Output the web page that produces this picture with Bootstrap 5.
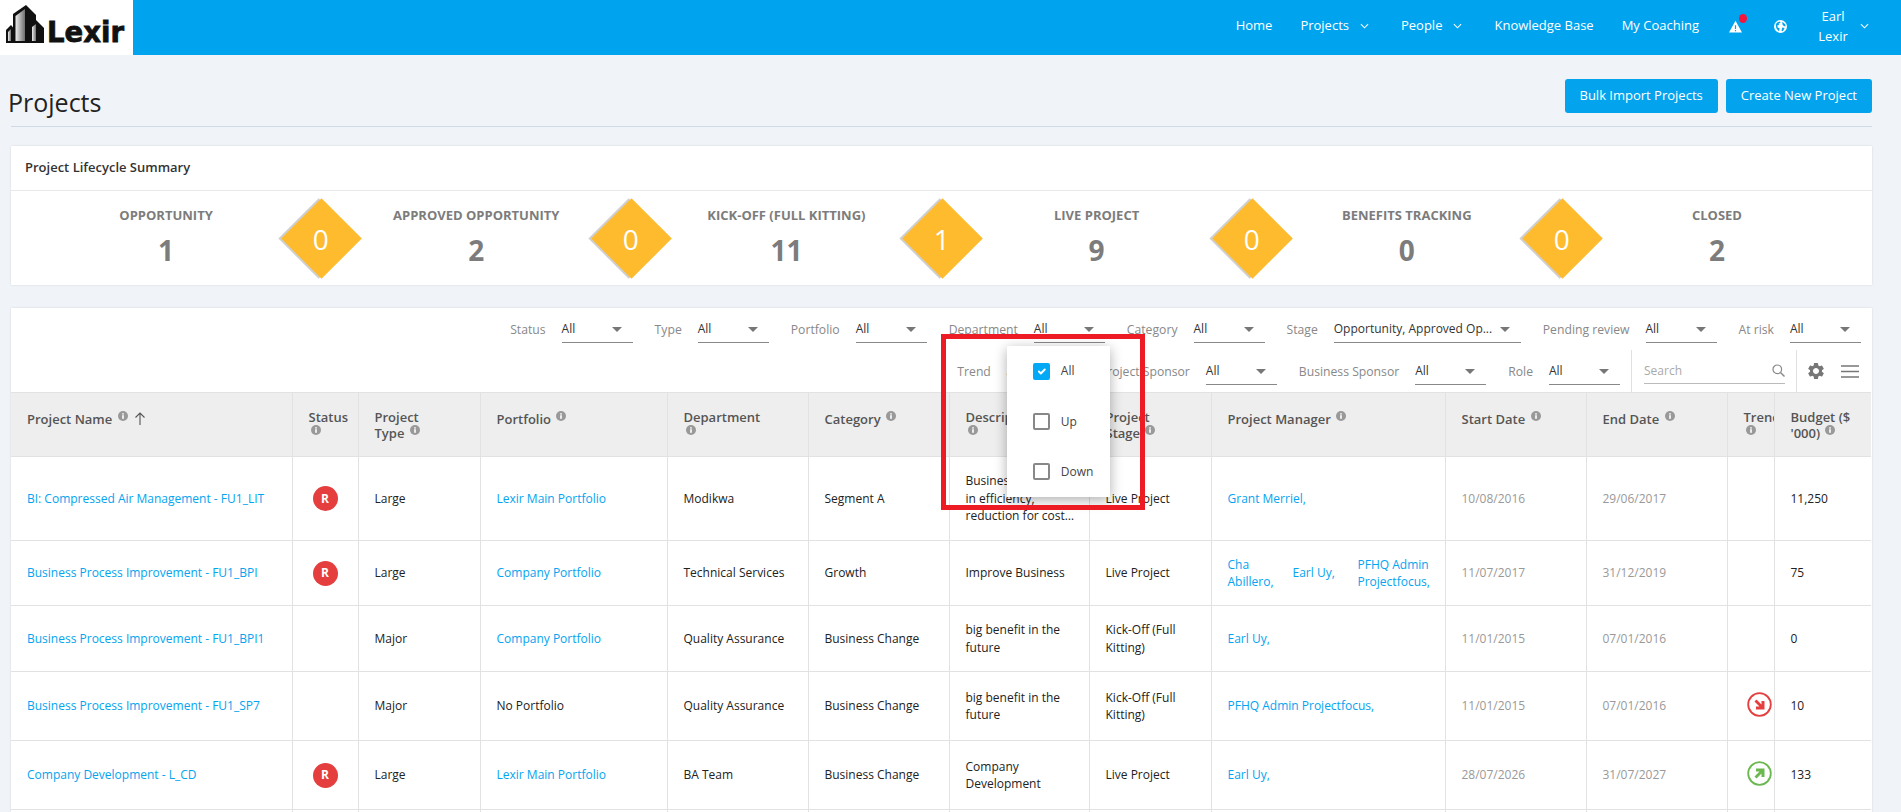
<!DOCTYPE html>
<html lang="en">
<head>
    <meta charset="UTF-8">
    <meta name="viewport" content="width=device-width, initial-scale=1.0">
    <title>Projects</title>
    <link href="https://cdn.jsdelivr.net/npm/bootstrap@5.3.0/dist/css/bootstrap.min.css" rel="stylesheet">
    <style>
        html, body { height: 100%; overflow: hidden; }
        body {
            background: #f0f4f8;
            font-family: "Open Sans", "Liberation Sans", sans-serif;
            font-size: 12px;
            color: #222;
        }
        a { text-decoration: none; color: #03a4f0; }

        .top-bar { height: 55px; background: #00a3ee; padding: 0; align-items: stretch; flex-wrap: nowrap; }
        .logo-box { width: 133px; background: #fff; display: block; }
        .top-links { height: 55px; align-items: center; flex-direction: row; padding-bottom: 3px; }
        .top-links .nav-link { color: #fff; font-size: 13px; font-weight: 500; padding: 0 14px; white-space: nowrap; display: flex; align-items: center; }
        .nav-chev { margin-left: 11px; margin-right: 4px; }
        .icon-link-box { position: relative; width: 45px; justify-content: center; padding: 0 !important; }
        .alert-dot { position: absolute; width: 8px; height: 9px; background: #f4143c; border-radius: 50%; left: 26px; top: -6px; }
        .user-name { width: 44px; text-align: center; line-height: 20px; }
        .user-link { padding: 0 32px 0 8px !important; }
        .user-link svg { margin-left: 5px; }

        .page-wrap { padding: 0 29px 0 11px; }
        .title-row { padding: 24px 0 7px; border-bottom: 1px solid #cfdae6; }
        .page-title { font-size: 25px; font-weight: 400; margin: 6px 0 0 -3px; color: #222; line-height: 34px; }
        .btn-lexir { background: #03a3ee; color: #fff; font-size: 13px; font-weight: 500; border: 0; border-radius: 3px; height: 34px; padding: 0 15px; }
        .btn-lexir:hover { background: #0392d6; color: #fff; }

        .panel-box { background: #fff; border: 0; border-radius: 0; box-shadow: 0 0 2px rgba(0,0,0,.12); }
        .summary-box { margin-top: 19px; height: 139px; }
        .summary-head { height: 45px; padding: 0 14px; font-size: 13px; font-weight: 600; color: #333; border-bottom: 1px solid #e8e8e8; display: flex; align-items: center; }
        .stage-col { flex: 1 1 0; position: relative; text-align: center; padding-top: 15px; height: 94px; }
        .stage-label { font-size: 13px; font-weight: 700; color: #7c7c7c; line-height: 18px; }
        .stage-num { font-size: 28px; font-weight: 700; color: #7c7c7c; line-height: 38px; margin-top: 7px; }
        .diamond-mark {
            position: absolute; right: -29px; top: 19px; width: 57px; height: 57px;
            background: #ffbb2e; transform: rotate(45deg); box-shadow: -2px 2px 0 #cfcfcf; z-index: 2;
            display: flex; align-items: center; justify-content: center;
        }
        .diamond-mark span { transform: rotate(-45deg); color: #fff; font-size: 28px; line-height: 1; }

        .list-box { margin-top: 23px; position: relative; }
        .filter-row { height: 42px; padding-right: 11px; justify-content: flex-end; }
        .filter-item { display: flex; align-items: flex-start; margin-left: 22px; padding-top: 9px; height: 42px; }
        .filter-label { color: #888; font-size: 12.2px; line-height: 26px; margin-right: 16px; white-space: nowrap; }
        .filter-pick { position: relative; width: 71px; height: 26px; border-bottom: 1px solid #888; color: #333; line-height: 24px; font-size: 12px; white-space: nowrap; }
        .filter-pick::after { content: ""; position: absolute; right: 11px; top: 10px; border: 5px solid transparent; border-top: 5px solid #777; border-bottom: 0; }
        .filter-pick.stage-pick { width: 187px; }
        .search-box { position: relative; width: 141px; height: 26px; border-bottom: 1px solid #bbb; color: #aaa; line-height: 26px; font-size: 12px; margin: 8px 11px 0 12px; }
        .search-box svg { position: absolute; right: 0; top: 6px; }
        .tool-zone { border-left: 1px solid #e0e0e0; height: 42px; margin-left: 11px; }
        .tool-icons { width: 76px; height: 42px; border-left: 1px solid #e0e0e0; padding-left: 9px; margin-right: -11px; display: flex; align-items: center; gap: 15px; }

        .trend-menu {
            display: block; position: absolute; left: 0; top: -13px; width: 103px; min-width: 0; height: 151px; padding: 0; border: 0; border-radius: 0;
            background: #fff; box-shadow: 0 3px 12px rgba(0,0,0,.32); z-index: 5; color: #444; font-size: 12px;
        }
        .trend-option { height: 50.4px; display: flex; align-items: center; padding-left: 26px; gap: 11px; margin: 0; }
        .trend-option .form-check-input { width: 17px; height: 17px; margin: 0; border: 2px solid #888; border-radius: 2px; flex: none; }
        .trend-option .form-check-input:checked { background-color: #03a9f4; border-color: #03a9f4; }
        .red-frame { position: absolute; left: 930px; top: 26px; width: 204px; height: 176px; border: 5px solid #ed1c24; z-index: 6; pointer-events: none; }

        .project-table { table-layout: fixed; width: 1860px; margin: 0; border-collapse: collapse; font-size: 12px; }
        .project-table th, .project-table td { border: 1px solid #e2e2e2; padding: 0 10px 0 16px; vertical-align: middle; overflow: hidden; }
        .project-table tr > :first-child { border-left: 0; }
        .project-table tr > :last-child { border-right: 0; }
        .project-table th { background: #eee; height: 64px; font-size: 13px; font-weight: 600; color: #555; line-height: 16px; }
        .project-table th.head-single { padding-bottom: 11px; }
        .project-table td { color: #222; line-height: 17.5px; }
        .project-table td.date-cell { color: #999; }
        .project-table td.trend-cell { text-align: right; padding: 0 2px 4px 0; }
        .project-table td.status-cell { text-align: center; padding: 0; }
        .project-table tbody tr:nth-child(1) td { height: 84px; }
        .project-table tbody tr:nth-child(2) td { height: 65px; }
        .project-table tbody tr:nth-child(3) td { height: 66px; }
        .project-table tbody tr:nth-child(4) td { height: 69px; }
        .project-table tbody tr:nth-child(5) td { height: 69px; }
        .project-table tbody tr:nth-child(6) td { height: 60px; }
        .cw-name { width: 281px; } .cw-status { width: 66px; } .cw-type { width: 122px; } .cw-port { width: 187px; }
        .cw-dept { width: 141px; } .cw-cat { width: 141px; } .cw-desc { width: 140px; } .cw-stage { width: 122px; }
        .cw-mgr { width: 234px; } .cw-date { width: 141px; } .cw-trend { width: 47px; } .cw-budget { width: 97px; }
        .info-mark { width: 10px; height: 10px; vertical-align: 3px; margin-left: 2px; }
        .sort-mark { width: 12px; height: 13px; vertical-align: -1px; margin-left: 6px; }
        .risk-badge { width: 25px; height: 25px; background: #e53e3e; color: #fff; font-weight: 700; font-size: 12px; border-radius: 50%; display: inline-flex; align-items: center; justify-content: center; }
        .clamp-three { display: -webkit-box; -webkit-line-clamp: 3; -webkit-box-orient: vertical; overflow: hidden; }
        .mgr-grid { display: grid; grid-template-columns: 65px 65px 1fr; align-items: center; }
    </style>
</head>
<body>
    <svg width="0" height="0" class="position-absolute">
        <defs>
            <symbol id="ic-info" viewBox="0 0 10 10">
                <circle cx="5" cy="5" r="5" fill="#999"/>
                <rect x="4.2" y="4.2" width="1.6" height="3.6" fill="#fff"/>
                <rect x="4.2" y="2.2" width="1.6" height="1.4" fill="#fff"/>
            </symbol>
            <symbol id="ic-chev" viewBox="0 0 10 6">
                <path d="M1 1l4 4 4-4" fill="none" stroke="#fff" stroke-width="1.2"/>
            </symbol>
            <linearGradient id="towerShade" x1="0" y1="0" x2="1" y2="0">
                <stop offset="0" stop-color="#efefef"/>
                <stop offset="1" stop-color="#6f6f6f"/>
            </linearGradient>
        </defs>
    </svg>

    <nav class="navbar top-bar">
        <a class="logo-box" href="#">
            <svg width="133" height="55" viewBox="0 0 133 55">
                <path d="M13 14 L26 5 L36 15 L36 43 L13 43 Z" fill="#111"/>
                <path d="M15.500 16 L25 9 L25 41 L15.500 41 Z" fill="url(#towerShade)"/>
                <path d="M6 43 L6 30 L11 25 L15 30 L15 43 Z" fill="#111"/>
                <path d="M8 32 L11 29 L11 41 L8 41 Z" fill="url(#towerShade)"/>
                <path d="M30 43 L30 24 L36 20 L44 28 L44 43 Z" fill="#111"/>
                <path d="M32 27 L36 24 L36 41 L32 41 Z" fill="url(#towerShade)"/>
                <text x="47" y="42" font-family="DejaVu Sans" font-weight="700" font-size="29" textLength="77" lengthAdjust="spacingAndGlyphs" stroke="#111" stroke-width=".8" fill="#111">Lexir</text>
            </svg>
        </a>
        <ul class="nav top-links ms-auto">
            <li class="nav-item"><a class="nav-link" href="#">Home</a></li>
            <li class="nav-item"><a class="nav-link" href="#">Projects<svg class="nav-chev" width="9" height="6"><use href="#ic-chev"/></svg></a></li>
            <li class="nav-item"><a class="nav-link" href="#">People<svg class="nav-chev" width="9" height="6"><use href="#ic-chev"/></svg></a></li>
            <li class="nav-item"><a class="nav-link" href="#">Knowledge Base</a></li>
            <li class="nav-item"><a class="nav-link" href="#">My Coaching</a></li>
            <li class="nav-item">
                <a class="nav-link icon-link-box" href="#">
                    <svg width="13" height="13" viewBox="0 0 15 15"><path fill="#fff" fill-rule="evenodd" d="M7.500 1 L15 14.500 L0 14.500 Z M6.800 6 L8.200 6 L8.200 10.500 L6.800 10.500 Z M6.800 11.500 L8.200 11.500 L8.200 13 L6.800 13 Z"/></svg>
                    <span class="alert-dot" aria-hidden="true"></span>
                </a>
            </li>
            <li class="nav-item">
                <a class="nav-link icon-link-box" href="#">
                    <svg width="13" height="13" viewBox="0 0 14 14"><circle cx="7" cy="7" r="7" fill="#fff"/><path fill="#00a3ee" d="M2 4.500 C3 2.500 5 1.500 6.500 1.500 L7 3 L5 4 L5.500 5.500 L3.500 6 L4 8 L6 9 L5.500 12 C3.500 11 1.500 8 2 4.500 Z M9 2 L12 4.500 L12.500 7 L10.500 6.500 L9 4.500 Z M9 8 L11.500 8.500 L9.500 12 L8 11.500 Z"/></svg>
                </a>
            </li>
            <li class="nav-item">
                <a class="nav-link user-link" href="#"><span class="user-name">Earl<br>Lexir</span><svg width="9" height="6"><use href="#ic-chev"/></svg></a>
            </li>
        </ul>
    </nav>

    <main class="page-wrap">
        <div class="title-row d-flex justify-content-between align-items-start">
            <h1 class="page-title">Projects</h1>
            <div class="d-flex gap-2">
                <button class="btn btn-lexir" type="button">Bulk Import Projects</button>
                <button class="btn btn-lexir" type="button">Create New Project</button>
            </div>
        </div>

        <section class="panel-box summary-box">
            <div class="summary-head">Project Lifecycle Summary</div>
            <div class="d-flex">
                <div class="stage-col"><div class="stage-label">OPPORTUNITY</div><div class="stage-num">1</div><div class="diamond-mark"><span>0</span></div></div>
                <div class="stage-col"><div class="stage-label">APPROVED OPPORTUNITY</div><div class="stage-num">2</div><div class="diamond-mark"><span>0</span></div></div>
                <div class="stage-col"><div class="stage-label">KICK-OFF (FULL KITTING)</div><div class="stage-num">11</div><div class="diamond-mark"><span>1</span></div></div>
                <div class="stage-col"><div class="stage-label">LIVE PROJECT</div><div class="stage-num">9</div><div class="diamond-mark"><span>0</span></div></div>
                <div class="stage-col"><div class="stage-label">BENEFITS TRACKING</div><div class="stage-num">0</div><div class="diamond-mark"><span>0</span></div></div>
                <div class="stage-col"><div class="stage-label">CLOSED</div><div class="stage-num">2</div></div>
            </div>
        </section>

        <section class="panel-box list-box">
            <div class="d-flex filter-row">
                <div class="filter-item"><span class="filter-label">Status</span><div class="filter-pick">All</div></div>
                <div class="filter-item"><span class="filter-label">Type</span><div class="filter-pick">All</div></div>
                <div class="filter-item"><span class="filter-label">Portfolio</span><div class="filter-pick">All</div></div>
                <div class="filter-item"><span class="filter-label">Department</span><div class="filter-pick">All</div></div>
                <div class="filter-item"><span class="filter-label">Category</span><div class="filter-pick">All</div></div>
                <div class="filter-item"><span class="filter-label">Stage</span><div class="filter-pick stage-pick">Opportunity, Approved Op...</div></div>
                <div class="filter-item"><span class="filter-label">Pending review</span><div class="filter-pick">All</div></div>
                <div class="filter-item"><span class="filter-label">At risk</span><div class="filter-pick">All</div></div>
            </div>
            <div class="d-flex filter-row">
                <div class="filter-item"><span class="filter-label">Trend</span>
                    <div class="filter-pick">All
                        <div class="dropdown-menu trend-menu">
                            <label class="trend-option"><input class="form-check-input" type="checkbox" checked><span>All</span></label>
                            <label class="trend-option"><input class="form-check-input" type="checkbox"><span>Up</span></label>
                            <label class="trend-option"><input class="form-check-input" type="checkbox"><span>Down</span></label>
                        </div>
                    </div>
                </div>
                <div class="filter-item"><span class="filter-label">Project Sponsor</span><div class="filter-pick">All</div></div>
                <div class="filter-item"><span class="filter-label">Business Sponsor</span><div class="filter-pick">All</div></div>
                <div class="filter-item"><span class="filter-label">Role</span><div class="filter-pick">All</div></div>
                <div class="tool-zone d-flex">
                    <div class="search-box">Search
                        <svg width="13" height="13" viewBox="0 0 13 13"><circle cx="5.300" cy="5.300" r="4.300" fill="none" stroke="#888" stroke-width="1.200"/><path d="M8.500 8.500L12.500 12.500" stroke="#888" stroke-width="1.400"/></svg>
                    </div>
                    <div class="tool-icons">
                        <svg width="20" height="20" viewBox="0 0 24 24"><path fill="#777" d="M19.140 12.940c.04-.3.060-.61.060-.94 0-.32-.02-.64-.07-.94l2.030-1.580a.49.49 0 0 0 .12-.61l-1.920-3.320a.488.488 0 0 0-.59-.22l-2.390.96c-.5-.38-1.030-.7-1.620-.94l-.36-2.540a.484.484 0 0 0-.48-.41h-3.840c-.24 0-.43.17-.47.41l-.36 2.540c-.59.24-1.130.57-1.620.94l-2.390-.96c-.22-.08-.47 0-.59.22L2.740 8.870c-.12.21-.08.47.12.61l2.030 1.580c-.05.3-.09.63-.09.94s.02.64.07.94l-2.030 1.580a.49.49 0 0 0-.12.61l1.920 3.320c.12.22.37.29.59.22l2.390-.96c.5.38 1.030.7 1.620.94l.36 2.540c.05.24.24.41.48.41h3.840c.24 0 .44-.17.47-.41l.36-2.540c.59-.24 1.130-.56 1.620-.94l2.390.96c.22.08.47 0 .59-.22l1.920-3.320c.12-.22.070-.47-.12-.61l-2.010-1.580zM12 15.600c-1.980 0-3.600-1.620-3.600-3.600s1.620-3.600 3.600-3.600 3.600 1.620 3.600 3.600-1.620 3.600-3.600 3.600z"/></svg>
                        <svg width="18" height="13" viewBox="0 0 18 13"><path d="M0 1h18M0 6.500h18M0 12h18" stroke="#777" stroke-width="1.700"/></svg>
                    </div>
                </div>
            </div>

            <table class="table project-table">
                <colgroup>
                    <col class="cw-name"><col class="cw-status"><col class="cw-type"><col class="cw-port"><col class="cw-dept"><col class="cw-cat">
                    <col class="cw-desc"><col class="cw-stage"><col class="cw-mgr"><col class="cw-date"><col class="cw-date"><col class="cw-trend"><col class="cw-budget">
                </colgroup>
                <thead>
                    <tr>
                        <th class="head-single">Project Name <svg class="info-mark"><use href="#ic-info"/></svg><svg class="sort-mark" viewBox="0 0 12 13"><path d="M6 13V1M1.500 5.500L6 1l4.500 4.500" fill="none" stroke="#555" stroke-width="1.100"/></svg></th>
                        <th>Status <svg class="info-mark"><use href="#ic-info"/></svg></th>
                        <th>Project<br>Type <svg class="info-mark"><use href="#ic-info"/></svg></th>
                        <th class="head-single">Portfolio <svg class="info-mark"><use href="#ic-info"/></svg></th>
                        <th>Department<br><svg class="info-mark"><use href="#ic-info"/></svg></th>
                        <th class="head-single">Category <svg class="info-mark"><use href="#ic-info"/></svg></th>
                        <th>Description<br><svg class="info-mark"><use href="#ic-info"/></svg></th>
                        <th>Project<br>Stage <svg class="info-mark"><use href="#ic-info"/></svg></th>
                        <th class="head-single">Project Manager <svg class="info-mark"><use href="#ic-info"/></svg></th>
                        <th class="head-single">Start Date <svg class="info-mark"><use href="#ic-info"/></svg></th>
                        <th class="head-single">End Date <svg class="info-mark"><use href="#ic-info"/></svg></th>
                        <th>Trend <svg class="info-mark"><use href="#ic-info"/></svg></th>
                        <th>Budget ($ '000) <svg class="info-mark"><use href="#ic-info"/></svg></th>
                    </tr>
                </thead>
                <tbody>
                    <tr>
                        <td><a href="#">BI: Compressed Air Management - FU1_LIT</a></td>
                        <td class="status-cell"><span class="risk-badge">R</span></td>
                        <td>Large</td>
                        <td><a href="#">Lexir Main Portfolio</a></td>
                        <td>Modikwa</td>
                        <td>Segment A</td>
                        <td><span class="clamp-three">Business savings<br>in efficiency, reduction for cost savings</span></td>
                        <td>Live Project</td>
                        <td><a href="#">Grant Merriel,</a></td>
                        <td class="date-cell">10/08/2016</td>
                        <td class="date-cell">29/06/2017</td>
                        <td class="trend-cell"></td>
                        <td>11,250</td>
                    </tr>
                    <tr>
                        <td><a href="#">Business Process Improvement - FU1_BPI</a></td>
                        <td class="status-cell"><span class="risk-badge">R</span></td>
                        <td>Large</td>
                        <td><a href="#">Company Portfolio</a></td>
                        <td>Technical Services</td>
                        <td>Growth</td>
                        <td>Improve Business</td>
                        <td>Live Project</td>
                        <td><div class="mgr-grid"><a href="#">Cha Abillero,</a><a href="#">Earl Uy,</a><a href="#">PFHQ Admin Projectfocus,</a></div></td>
                        <td class="date-cell">11/07/2017</td>
                        <td class="date-cell">31/12/2019</td>
                        <td class="trend-cell"></td>
                        <td>75</td>
                    </tr>
                    <tr>
                        <td><a href="#">Business Process Improvement - FU1_BPI1</a></td>
                        <td class="status-cell"></td>
                        <td>Major</td>
                        <td><a href="#">Company Portfolio</a></td>
                        <td>Quality Assurance</td>
                        <td>Business Change</td>
                        <td>big benefit in the future</td>
                        <td>Kick-Off (Full Kitting)</td>
                        <td><a href="#">Earl Uy,</a></td>
                        <td class="date-cell">11/01/2015</td>
                        <td class="date-cell">07/01/2016</td>
                        <td class="trend-cell"></td>
                        <td>0</td>
                    </tr>
                    <tr>
                        <td><a href="#">Business Process Improvement - FU1_SP7</a></td>
                        <td class="status-cell"></td>
                        <td>Major</td>
                        <td>No Portfolio</td>
                        <td>Quality Assurance</td>
                        <td>Business Change</td>
                        <td>big benefit in the future</td>
                        <td>Kick-Off (Full Kitting)</td>
                        <td><a href="#">PFHQ Admin Projectfocus,</a></td>
                        <td class="date-cell">11/01/2015</td>
                        <td class="date-cell">07/01/2016</td>
                        <td class="trend-cell"><svg width="25" height="25" viewBox="0 0 25 25"><circle cx="12.500" cy="12.500" r="11.300" fill="none" stroke="#e53e3e" stroke-width="1.800"/><path fill="#e53e3e" d="M7.500 9.500L9.500 7.500L14.500 12.500L14.500 9L17.500 9L17.500 17.500L9 17.500L9 14.500L12.500 14.500Z"/></svg></td>
                        <td>10</td>
                    </tr>
                    <tr>
                        <td><a href="#">Company Development - L_CD</a></td>
                        <td class="status-cell"><span class="risk-badge">R</span></td>
                        <td>Large</td>
                        <td><a href="#">Lexir Main Portfolio</a></td>
                        <td>BA Team</td>
                        <td>Business Change</td>
                        <td>Company Development</td>
                        <td>Live Project</td>
                        <td><a href="#">Earl Uy,</a></td>
                        <td class="date-cell">28/07/2026</td>
                        <td class="date-cell">31/07/2027</td>
                        <td class="trend-cell"><svg width="25" height="25" viewBox="0 0 25 25"><circle cx="12.500" cy="12.500" r="11.300" fill="none" stroke="#6ab84f" stroke-width="1.800"/><path fill="#6ab84f" d="M7.500 15.500L9.500 17.500L14.500 12.500L14.500 16L17.500 16L17.500 7.500L9 7.500L9 10.500L12.500 10.500Z"/></svg></td>
                        <td>133</td>
                    </tr>
                    <tr><td></td><td></td><td></td><td></td><td></td><td></td><td></td><td></td><td></td><td></td><td></td><td></td><td></td></tr>
                </tbody>
            </table>
            <div class="red-frame"></div>
        </section>
    </main>
</body>
</html>
